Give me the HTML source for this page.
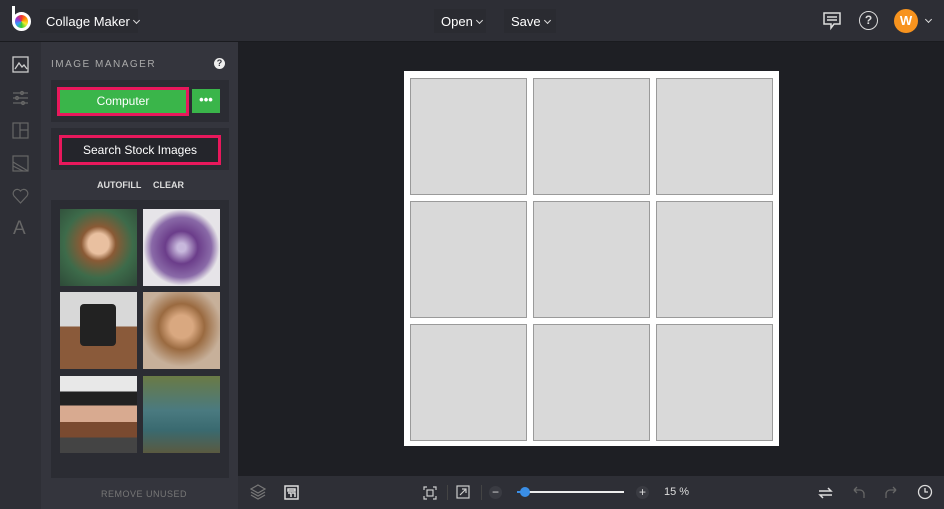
<!DOCTYPE html>
<html><head><style>
*{margin:0;padding:0;box-sizing:border-box}
body{width:944px;height:509px;background:#1e1f24;font-family:"Liberation Sans",sans-serif;position:relative;overflow:hidden;color:#fff}
.a{position:absolute}
.cell{position:absolute;width:117px;height:117px;background:#d9d9d9;border:1px solid #9a9a9a}
.ph{position:absolute;width:77px;height:77px}
.dd{position:absolute;top:9px;height:24px;background:#2a2b31;font-size:13px;padding:5px 7px;white-space:nowrap}
.chev{display:inline-block;width:5px;height:5px;border-right:1.2px solid #ddd;border-bottom:1.2px solid #ddd;transform:rotate(45deg);margin-left:4px;vertical-align:3px}
</style></head><body>
<div class="a" style="left:0;top:0;width:944px;height:42px;background:#2d2e35;border-bottom:1px solid #1a1b1f"></div>
<div class="a" style="left:12px;top:6px;width:3px;height:16px;background:#fff"></div>
<div class="a" style="left:12px;top:12px;width:19px;height:19px;border-radius:50%;background:conic-gradient(#e33,#f90,#ee3,#3c3,#39f,#93c,#e33);border:3px solid #fff"></div>
<div class="dd" style="left:40px;width:98px;padding-left:6px">Collage Maker<span class="chev"></span></div>
<div class="dd" style="left:434px;width:52px">Open<span class="chev"></span></div>
<div class="dd" style="left:504px;width:52px">Save<span class="chev"></span></div>
<svg class="a" style="left:822px;top:11px" width="20" height="20" viewBox="0 0 20 20" fill="none" stroke="#ddd" stroke-width="1.5"><path d="M2 2h16v11h-6l-3 4v-4H2z"/><path d="M5 6h10M5 9h10"/></svg>
<div class="a" style="left:859px;top:11px;width:19px;height:19px;border:1.5px solid #ddd;border-radius:50%;font-size:12px;font-weight:bold;text-align:center;line-height:16px;color:#ddd">?</div>
<div class="a" style="left:894px;top:9px;width:24px;height:24px;border-radius:50%;background:#f7931e;font-size:13px;font-weight:bold;text-align:center;line-height:24px">W</div>
<span class="chev a" style="left:922px;top:17px"></span>

<div class="a" style="left:0;top:42px;width:41px;height:467px;background:#2e2f36"></div>
<svg class="a" style="left:12px;top:56px" width="17" height="17" fill="none" stroke="#ccc" stroke-width="1.3"><rect x="1" y="1" width="15" height="15"/><path d="M3 13l4-6 3 4 2-2 3 4"/></svg>
<svg class="a" style="left:12px;top:89px" width="17" height="17" fill="none" stroke="#666" stroke-width="1.2"><path d="M1 4h15M1 9h15M1 14h15"/><circle cx="10" cy="4" r="1.5"/><circle cx="5" cy="9" r="1.5"/><circle cx="11" cy="14" r="1.5"/></svg>
<svg class="a" style="left:12px;top:122px" width="17" height="17" fill="none" stroke="#666" stroke-width="1.2"><rect x="1" y="1" width="15" height="15"/><path d="M8 1v15M8 8h8"/></svg>
<svg class="a" style="left:12px;top:155px" width="17" height="17" fill="none" stroke="#666" stroke-width="1.2"><rect x="1" y="1" width="15" height="15"/><path d="M1 7l15 9M1 11l10 5"/></svg>
<svg class="a" style="left:12px;top:188px" width="17" height="16" fill="none" stroke="#666" stroke-width="1.2"><path d="M8.5 15L2 8a3.5 3.5 0 0 1 6.5-5 3.5 3.5 0 0 1 6.5 5z"/></svg>
<div class="a" style="left:13px;top:218px;font-size:19px;color:#666">A</div>

<div class="a" style="left:41px;top:42px;width:197px;height:467px;background:#34353d"></div>
<div class="a" style="left:51px;top:59px;font-size:10px;letter-spacing:1.5px;color:#aaa">IMAGE MANAGER</div>
<div class="a" style="left:214px;top:58px;width:11px;height:11px;border-radius:50%;background:#eee;color:#34353d;font-size:9px;font-weight:bold;text-align:center;line-height:11px">?</div>
<div class="a" style="left:51px;top:80px;width:178px;height:42px;background:#2b2c33"></div>
<div class="a" style="left:57px;top:87px;width:132px;height:29px;border:3px solid #e8185c;background:#3ab54a;font-size:12px;text-align:center;line-height:23px">Computer</div>
<div class="a" style="left:192px;top:89px;width:28px;height:24px;background:#3ab54a;text-align:center;font-size:13px;font-weight:bold;line-height:22px">•••</div>
<div class="a" style="left:51px;top:128px;width:178px;height:42px;background:#2b2c33"></div>
<div class="a" style="left:59px;top:135px;width:162px;height:30px;border:3px solid #e8185c;background:#24252b;font-size:12px;text-align:center;line-height:24px">Search Stock Images</div>
<div class="a" style="left:97px;top:180px;font-size:9px;font-weight:bold;color:#ddd">AUTOFILL</div>
<div class="a" style="left:153px;top:180px;font-size:9px;font-weight:bold;color:#ddd">CLEAR</div>
<div class="a" style="left:51px;top:200px;width:178px;height:278px;background:#2b2c33"></div>
<div class="ph" style="left:60px;top:209px;background:radial-gradient(circle at 50% 45%,#e9c0a0 0 18%,#8a5a35 30%,#3d6b4a 60%,#2e4a38)"></div>
<div class="ph" style="left:143px;top:209px;background:radial-gradient(circle at 50% 50%,#c7b8dc 0 8%,#6b3d8a 30%,#8a6aa8 55%,#e6e4e8 70%)"></div>
<div class="ph" style="left:60px;top:292px;background:linear-gradient(#d8d8d8 0 45%,#8a5a3a 45%);"><div class="a" style="left:20px;top:12px;width:36px;height:42px;background:#222;border-radius:4px"></div></div>
<div class="ph" style="left:143px;top:292px;background:radial-gradient(circle at 50% 45%,#d9a880 0 20%,#9a6a40 40%,#c7b09a 70%)"></div>
<div class="ph" style="left:60px;top:376px;background:linear-gradient(#e8e8e8 0 20%,#222 20% 38%,#d8aa90 38% 60%,#7a4a30 60% 80%,#444 80%)"></div>
<div class="ph" style="left:143px;top:376px;background:linear-gradient(#6a7a45,#4a7a80 45%,#3a6a70 70%,#5a5a40)"></div>
<div class="a" style="left:101px;top:489px;font-size:9px;letter-spacing:.5px;color:#777">REMOVE UNUSED</div>

<div class="a" style="left:404px;top:71px;width:375px;height:375px;background:#fff"></div>
<div class="cell" style="left:410px;top:78px"></div><div class="cell" style="left:533px;top:78px"></div><div class="cell" style="left:656px;top:78px"></div>
<div class="cell" style="left:410px;top:201px"></div><div class="cell" style="left:533px;top:201px"></div><div class="cell" style="left:656px;top:201px"></div>
<div class="cell" style="left:410px;top:324px"></div><div class="cell" style="left:533px;top:324px"></div><div class="cell" style="left:656px;top:324px"></div>

<div class="a" style="left:238px;top:476px;width:706px;height:33px;background:#2e2f36"></div>
<svg class="a" style="left:250px;top:484px" width="16" height="16" fill="none" stroke="#777" stroke-width="1.2"><path d="M8 1l7 4-7 4-7-4z M1 8l7 4 7-4 M1 11l7 4 7-4"/></svg>
<svg class="a" style="left:284px;top:485px" width="15" height="15" fill="none" stroke="#ddd" stroke-width="1.5"><rect x="1" y="1" width="13" height="13"/><path d="M4 4h7v2H4zM4 8h3v4M8 8h3v4"/></svg>
<svg class="a" style="left:423px;top:486px" width="14" height="14" fill="none" stroke="#ccc" stroke-width="1.2"><path d="M1 4V1h3M10 1h3v3M13 10v3h-3M4 13H1v-3"/><rect x="4" y="4" width="6" height="6"/></svg>
<div class="a" style="left:447px;top:485px;width:1px;height:15px;background:#444"></div>
<svg class="a" style="left:456px;top:485px" width="14" height="14" fill="none" stroke="#ccc" stroke-width="1.2"><rect x="1" y="1" width="12" height="12"/><path d="M4 10l6-6M6 4h4v4"/></svg>
<div class="a" style="left:481px;top:485px;width:1px;height:15px;background:#444"></div>
<div class="a" style="left:489px;top:486px;width:13px;height:13px;border-radius:50%;background:#3a3b42;text-align:center;font-size:12px;line-height:12px;color:#ddd">−</div>
<div class="a" style="left:517px;top:491px;width:107px;height:2px;background:#eee"></div>
<div class="a" style="left:517px;top:491px;width:9px;height:2px;background:#3a8ee6"></div>
<div class="a" style="left:520px;top:487px;width:10px;height:10px;border-radius:50%;background:#3a8ee6"></div>
<div class="a" style="left:636px;top:486px;width:13px;height:13px;border-radius:50%;background:#3a3b42;text-align:center;font-size:12px;line-height:13px;color:#ddd">+</div>
<div class="a" style="left:664px;top:486px;font-size:11px;color:#ddd">15 %</div>
<svg class="a" style="left:818px;top:485px" width="15" height="15" fill="none" stroke="#ddd" stroke-width="1.5"><path d="M1 6h12l-3-3M14 10H2l3 3"/></svg>
<svg class="a" style="left:852px;top:485px" width="14" height="14" fill="none" stroke="#666" stroke-width="1.3"><path d="M2 5h6a4 4 0 0 1 4 4v4M2 5l3-3M2 5l3 3"/></svg>
<svg class="a" style="left:884px;top:485px" width="14" height="14" fill="none" stroke="#666" stroke-width="1.3"><path d="M12 5H6a4 4 0 0 0-4 4v4M12 5l-3-3M12 5l-3 3"/></svg>
<svg class="a" style="left:917px;top:484px" width="16" height="16" fill="none" stroke="#ddd" stroke-width="1.3"><circle cx="8" cy="8" r="6.5"/><path d="M8 4v4h3"/></svg>
</body></html>
